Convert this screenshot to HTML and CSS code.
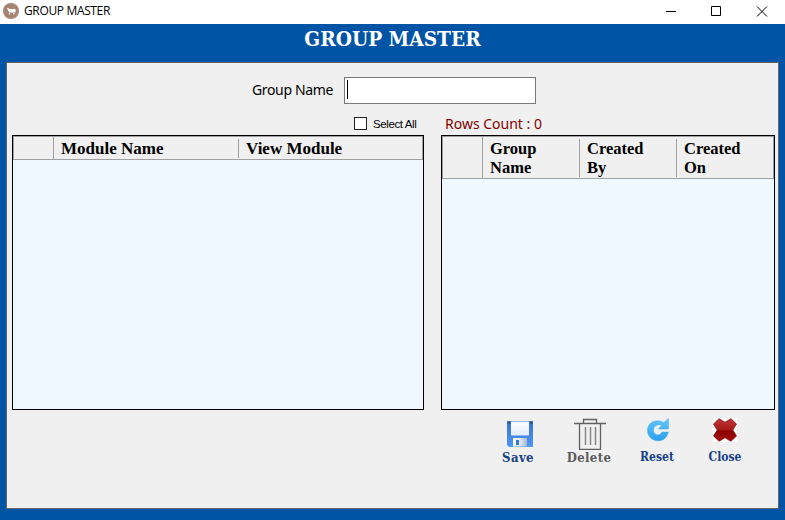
FILE: index.html
```html
<!DOCTYPE html>
<html lang="en">
<head>
<meta charset="utf-8">
<title>GROUP MASTER</title>
<link rel="stylesheet" href="styles.css">
</head>
<body>
<div class="window">
  <header class="titlebar">
    <svg class="app-icon" width="16" height="16" viewBox="0 0 16 16"><circle cx="8" cy="8" r="8" fill="#a58472"/><path d="M4 5h1.500l.5 1h6.500v3.500H6.200z" fill="#fff"/><circle cx="6.500" cy="10.700" r=".8" fill="#fff"/><circle cx="10.800" cy="10.700" r=".8" fill="#fff"/></svg>
    <span class="caption">GROUP MASTER</span>
    <svg class="controls" width="102" height="11" viewBox="0 0 102 11" fill="none" stroke="#000"><path d="M0 5.500h10"/><path d="M45.500.5h9v9h-9z"/><path d="M91 .5l10 10M101 .5l-10 10"/></svg>
  </header>
  <h1 class="heading"><span>GROUP MASTER</span></h1>
  <main class="panel">
    <div class="name-row">
      <label class="name-label" for="group">Group Name</label>
      <div class="field" id="group"><i class="caret"></i></div>
    </div>
    <div class="options">
      <i class="check"></i>
      <span class="select-all">Select All</span>
      <span class="rows-count">Rows Count : 0</span>
    </div>
    <div class="grids">
      <section class="grid">
        <div class="head modules"><div></div><div>Module Name</div><div>View Module</div></div>
      </section>
      <section class="grid">
        <div class="head groups"><div></div><div>Group<br>Name</div><div>Created<br>By</div><div>Created<br>On</div></div>
      </section>
    </div>
    <div class="actions">
      <div class="action save">
        <svg width="32" height="32" viewBox="0 0 32 32"><defs><linearGradient id="disk" x2="0" y2="1"><stop stop-color="#3572cf"/><stop offset="1" stop-color="#4f98f4"/></linearGradient><linearGradient id="paper" x2="0" y2="1"><stop stop-color="#fff"/><stop offset="1" stop-color="#e2ebfa"/></linearGradient><linearGradient id="metal"><stop stop-color="#fff"/><stop offset=".45" stop-color="#e8edf5"/><stop offset="1" stop-color="#a9b7cc"/></linearGradient></defs><path d="M5 3h26v26H7l-2-2z" fill="url(#disk)"/><path d="M9 3.500h18v14H9z" fill="url(#paper)"/><path d="M6.500 5H8M28.500 5H30" stroke="#173f80" stroke-width="1.500"/><path d="M11 20h14v8.500H11z" fill="url(#metal)"/><path d="M14 22h3v5h-3z" fill="#3277dc"/></svg>
        <span>Save</span>
      </div>
      <div class="action delete">
        <svg width="32" height="32" viewBox="0 0 32 32" fill="none" stroke="#616161"><path d="M0 5.500h32M9.500 5V1.500h13V5M5.500 6v25.500h21V6" stroke-width="1.300"/><path d="M11.500 9v18M16.500 9v18M21.500 9v18" stroke="#858585" stroke-width="1.500"/></svg>
        <span>Delete</span>
      </div>
      <div class="action reset">
        <svg width="24" height="24" viewBox="0 0 24 24"><defs><linearGradient id="blue" x2="0" y2="1"><stop stop-color="#65c7fc"/><stop offset="1" stop-color="#299fee"/></linearGradient></defs><path d="M22.500.5V11H12.300l3.500-3.500C12 5.300 7.500 8 7.500 12s4.500 6.500 7.500 3.500l1-1.500h6.500C20.500 21 16 23 11.500 22.800 5.500 22.500 1.500 18 1.500 12.300 1.500 4.500 10 .2 17.800 4.500z" fill="url(#blue)" stroke="#42aff0" stroke-width=".5"/></svg>
        <span>Reset</span>
      </div>
      <div class="action close">
        <svg width="24" height="24" viewBox="0 0 24 24"><defs><linearGradient id="red" x2="0" y2="1"><stop stop-color="#bd3434"/><stop offset=".48" stop-color="#a91b1b"/><stop offset=".55" stop-color="#8c0000"/><stop offset="1" stop-color="#a60b0b"/></linearGradient></defs><path d="M0 0h24v24H0z" fill="#fff"/><path d="M6 .7l6 3.500 6-3.500L23.500 6l-3.700 6 3.700 6-5.500 5.300-6-3.500-6 3.500L.5 18l3.700-6L.5 6z" fill="url(#red)" stroke="#821919" stroke-width=".8"/></svg>
        <span>Close</span>
      </div>
    </div>
  </main>
</div>
</body>
</html>
```
FILE: styles.css
```css
* { box-sizing: border-box; }
body { margin: 0; }
.window { width: 785px; height: 520px; overflow: hidden; background: #0054a6; color: #000; font-family: "Noto Sans", sans-serif; }
.titlebar { height: 24px; display: flex; align-items: flex-start; background: #fff; padding: 3px 17px 0 3px; }
.caption { margin: 0 auto 0 5px; font: 12px/16px "Open Sans", sans-serif; letter-spacing: -.35px; }
.controls { margin-top: 3px; }
.heading { margin: 0; height: 38px; color: #fff; text-align: center; font: bold 21px/30px "DejaVu Serif Condensed", "DejaVu Serif", serif; white-space: nowrap; }
.heading span { display: inline-block; transform: scaleX(.985); }
.panel { margin: 0 6px; width: 773px; height: 447px; border: 1px solid #646464; background: #f0f0f0; }
.name-row { display: flex; padding: 14px 0 0 245px; height: 41px; }
.name-label { width: 92px; font-size: 14px; line-height: 26px; letter-spacing: -.35px; white-space: nowrap; }
.field { width: 192px; height: 27px; border: 1px solid #7a7a7a; background: #fff; padding: 2px; }
.caret { display: block; width: 1px; height: 19px; background: #000; }
.options { display: flex; align-items: center; height: 31px; padding: 9px 0 1px 347px; white-space: nowrap; }
.check { width: 13px; height: 13px; border: 1px solid #222; background: #fff; margin: 0 6px 0 0; }
.select-all { width: 72px; padding-top: 1px; font: 11.5px/18px "Liberation Sans", sans-serif; letter-spacing: -.4px; }
.rows-count { font-size: 14px; line-height: 20px; color: #800000; }
.grids { display: flex; gap: 17px; padding-left: 5px; }
.grid { width: 412px; height: 275px; border: 1px solid #000; background: #f0f8ff; flex: none; }
.grid + .grid { width: 334px; }
.head { display: grid; border: 1px solid #a0a0a0; background: #f0f0f0; font: bold 17px/19px "Liberation Serif", serif; white-space: nowrap; }
.head > div { padding-left: 7px; border-left: 1px solid #a0a0a0; margin: 2px 0 1px; }
.head > div:first-child { border: 0; }
.head > div:nth-child(2) { margin: 0; padding-top: 2px; }
.modules { grid-template-columns: 39px 185px 1fr; height: 24px; }
.groups { grid-template-columns: 39px 97px 97px 1fr; height: 43px; font-size: 16.5px; }
.actions { display: flex; padding: 8px 0 0 485px; }
.action { display: flex; flex-direction: column; align-items: center; color: #153f87; font: bold 13px/16px "DejaVu Serif Condensed", "DejaVu Serif", serif; white-space: nowrap; }
.action svg { flex: none; }
.save { width: 52px; letter-spacing: .4px; }
.delete { width: 90px; color: #5b5b5b; letter-spacing: .4px; }
.delete svg { margin-left: 2px; }
.reset { width: 46px; }
.close { width: 90px; }
.reset svg, .close svg { margin-bottom: 7px; }
.reset svg { margin-left: 2px; }
.reset, .close { font-size: 12px; }
```
